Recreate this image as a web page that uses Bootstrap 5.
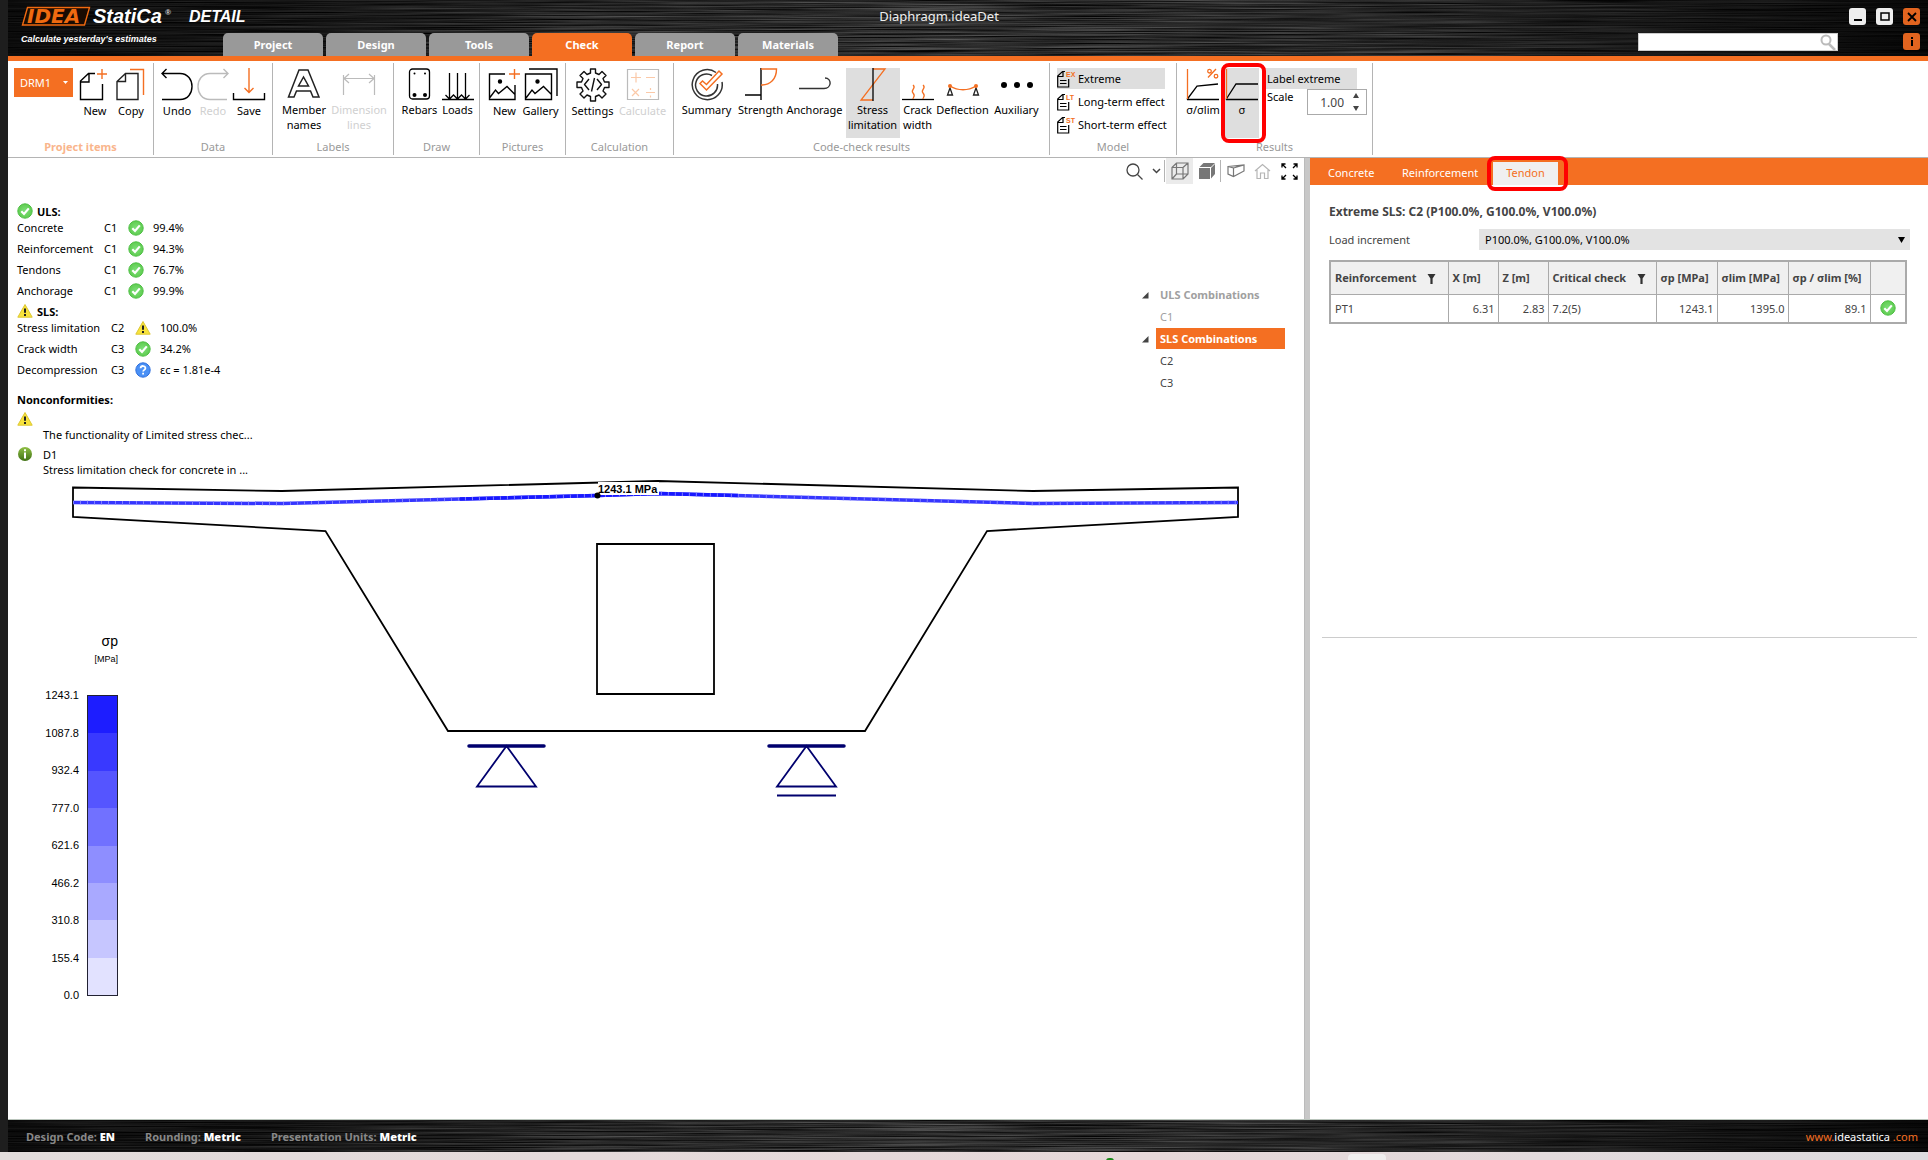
<!DOCTYPE html>
<html lang="en">
<head>
<meta charset="utf-8">
<meta name="viewport" content="width=device-width, initial-scale=1">
<title>IDEA StatiCa Detail - Diaphragm.ideaDet</title>
<link href="https://cdn.jsdelivr.net/npm/bootstrap@5.3.0/dist/css/bootstrap.min.css" rel="stylesheet">
<style>
:root { --brand: #f46f22; --line: #b4b4b4; }
html, body { height: 100%; }
body { font-family: "Noto Sans", "Open Sans", sans-serif; font-size: 11px; line-height: 15px; color: #000; background: #1e1e1e; }
button, input, select { font: inherit; }
svg { display: block; }
.app-shell { min-height: 100vh; }
.app-window { margin-left: 8px; background: #fff; }
.desk-edge { height: 8px; background: linear-gradient(90deg, #e2dcdb, #e6d8d9 60%, #dedcdf); overflow: hidden; }
.desk-edge .dot { width: 8px; height: 3px; margin-left: 1106px; border-radius: 4px 4px 0 0; background: #1b8a1b; margin-top: 6px; }
.desk-edge .pill { width: 38px; height: 8px; margin-left: 234px; border-radius: 4px 4px 0 0; background: #f0eeee; margin-top: 2px; }

/* brushed metal bars */
.metal { position: relative; background: #000; overflow: hidden; isolation: isolate; }
.metal > .grain { position: absolute; inset: 0; width: 100%; height: 100%; z-index: -1; }
.title-bar { height: 56px; }
.brand-box { width: 215px; padding-left: 12px; }
.main-tabs { gap: 3px; }
.main-tabs .nav-link { width: 100px; height: 23px; padding: 4px 0 0; text-align: center; font-weight: 700; line-height: 16px; color: #fff; background: #999; border-radius: 5px 5px 0 0; }
.main-tabs .nav-link.active { background: var(--brand); color: #fff; }
.doc-title { position: absolute; left: 0; right: 0; top: 7px; text-align: center; font-size: 13px; line-height: 18px; color: #eee; padding-right: 58px; }
.win-tools { width: 290px; padding: 8px 8px 0 0; }
.win-row { gap: 10px; }
.win-btn { width: 17px; height: 17px; padding: 0; border: 0; border-radius: 3px; background: #eee; }
.win-btn.hot { background: #e2641f; }
.find-box { width: 200px; height: 18px; background: #fff; border: 1px solid #ccc; }
.find-box input { border: 0; background: none; outline: 0; min-width: 0; }
.brand-rule { height: 5px; background: var(--brand); }

/* ribbon */
.ribbon { height: 97px; border-bottom: 1px solid var(--line); padding-top: 2px; }
.rgroup { height: 92px; border-right: 1px solid var(--line); padding-top: 5px; }
.rgroup .caption { color: #999; text-align: center; height: 15px; margin-bottom: 1px; }
.rgroup .caption.lit { color: #f9b58c; font-weight: 700; }
.tool { border: 0; background: none; padding: 0 0 1px; height: 70px; line-height: 15px; color: #000; white-space: nowrap; width: 36px; display: flex; flex-direction: column; align-items: center; }
.tool svg { flex: none; margin-bottom: 1px; }
.tool.on, .row-tool.on { background: #dedede; }
.tool:disabled { color: #d0d0d0; }
.tw-38 { width: 38px; } .tw-46 { width: 46px; } .tw-54 { width: 54px; } .tw-64 { width: 64px; } .tw-34 { width: 34px; }
.gw-146 { width: 146px; } .gw-119 { width: 119px; } .gw-121 { width: 121px; } .gw-86 { width: 86px; }
.gw-108 { width: 108px; } .gw-376 { width: 376px; } .gw-127 { width: 127px; } .gw-196 { width: 196px; }
.item-row { padding-left: 6px; }
.item-drop { width: 59px; height: 29px; background: var(--brand); color: #fff; border: 0; padding: 0 5px 0 6px; }
.model-list { gap: 2px; padding-left: 7px; }
.model-list svg { overflow: visible; }
.row-tool { border: 0; background: none; padding: 0; height: 21px; width: 108px; text-align: left; white-space: nowrap; }
.row-tool.label-tool { width: 94px; display: block; }
.scale-row { width: 104px; }
.spin-box { width: 60px; height: 26px; border: 1px solid #aaa; }
.spin-box input { border: 0; outline: 0; width: 36px; text-align: right; padding: 0; color: #444; font-size: 12px; }
.spin-box button { border: 0; background: none; padding: 0; height: 12px; }
.mark-red { position: absolute; border: 4px solid #f00; border-radius: 8px; pointer-events: none; }
.mark-sigma { inset: -5px -7px -5px -4px; z-index: 2; }
.mark-tab { inset: -6px -10px -6px -6px; z-index: 2; }

/* workspace */
.stage { position: relative; min-width: 0; }
.stage > .scene { position: absolute; left: 0; top: 0; width: 100%; }
.stage > .over { position: relative; }
.view-tools { height: 26px; padding-right: 1px; }
.view-tools button { border: 0; background: none; padding: 0; width: 27px; height: 26px; display: flex; align-items: center; justify-content: center; }
.view-tools button.narrow { width: 16px; }
.view-tools button.on { background: #ebebeb; }
.view-tools .sep { width: 1px; height: 22px; background: var(--line); margin-right: 1px; }
.checks { margin: 21px 0 0 9px; width: 260px; }
.sum-table { border-collapse: collapse; margin: 0 0 4px; }
.sum-table td { padding: 0; height: 21px; vertical-align: middle; white-space: nowrap; }
.uls td:nth-child(1) { width: 87px; } .sls td:nth-child(1) { width: 94px; }
.sum-table td:nth-child(2) { width: 24px; } .sum-table td:nth-child(3) { width: 25px; }
.head-line { height: 12px; font-weight: 700; gap: 4px; }
.note-head { font-weight: 700; padding-top: 8px; }
.note-text { padding-left: 26px; }
.note-id { padding-left: 10px; }
.combos { margin: 100px 19px 0 0; width: 143px; color: #555; }
.combos button { border: 0; background: none; padding: 0 0 0 4px; height: 21px; width: 129px; text-align: left; color: #444; margin-bottom: 1px; }
.combos .branch { font-weight: 700; }
.combos button.dim { color: #a0a0a0; }
.combos button.sel { background: var(--brand); color: #fff; }
.legend { margin: 155px 0 0 30px; width: 80px; font-family: "Liberation Sans", Arial, sans-serif; }
.legend .unit { font-size: 9px; line-height: 12px; margin: 3px 0 23px; }
.legend .qty { font-size: 14px; line-height: 18px; }
.legend .ticks { width: 41px; height: 315px; }
.legend .scale-bar { width: 31px; height: 301px; border: 1px solid #223; margin-top: 7px; }
.s1 { background: #1d1dff; } .s2 { background: #3939ff; } .s3 { background: #5555ff; } .s4 { background: #7171ff; }
.s5 { background: #8e8eff; } .s6 { background: #a9a9ff; } .s7 { background: #c6c6ff; } .s8 { background: #e2e2ff; }

.splitter { width: 6px; background: #c8c8c8; border-left: 1px solid #bbb; }
.side { width: 618px; color: #444; }
.side-tabs { height: 27px; background: var(--brand); padding: 4px 0 0 12px; }
.side-tabs .nav-link { padding: 3px 0 0; height: 23px; width: 74px; line-height: 16px; text-align: left; color: #fff; padding-left: 6px; }
.side-tabs .nav-link.mid { width: 97px; }
.side-tabs .nav-link.active { width: 65px; background: #f0f0f0; color: var(--brand); padding-left: 0; text-align: center; }
.side-body { padding: 19px 18px 0 19px; }
.side-head { font-weight: 700; font-size: 12px; }
.load-row { margin-top: 10px; }
.load-select { width: 100%; height: 21px; display: block; appearance: none; border: 0; border-radius: 0; background: #e3e3e3; padding: 0 6px; color: #000; }
.load-label { width: 150px; }
.res-table { width: 578px; margin: 10px 0 0; color: #444; border: 2px solid #aaa; border-collapse: collapse; table-layout: fixed; white-space: nowrap; }
.res-table th, .res-table td { border: 1px solid #aaa; padding: 0 3px 0 4px; vertical-align: middle; }
.res-table th { background: #f0f0f0; height: 33px; padding-right: 0; }
.res-table td { height: 29px; }
.c119 { width: 118px; } .c50 { width: 50px; } .c108 { width: 108px; } .c61 { width: 61px; } .c71 { width: 71px; } .c82 { width: 82px; }
.side-rule { margin: 313px 11px 0 12px; border-top: 1px solid #ccc; }

.status-bar { height: 33px; padding: 0 10px 0 18px; border-top: 1px solid #b9c4bb; font-weight: 700; color: #888; gap: 30px; }
.status-bar b { color: #fff; }
.site-link { font-weight: 400; color: var(--brand); text-decoration: none; }
.site-link span { color: #fff; }
</style>
<script src="https://cdn.jsdelivr.net/npm/bootstrap@5.3.0/dist/js/bootstrap.bundle.min.js"></script>
</head>
<body>
<svg width="0" height="0" class="position-absolute" aria-hidden="true">
  <defs>
    <filter id="brushed" x="0" y="0" width="100%" height="100%" color-interpolation-filters="sRGB">
      <feTurbulence type="fractalNoise" baseFrequency="0.006 0.8" numOctaves="3" seed="7"/>
      <feColorMatrix values="0.6 0 0 0 -0.12  0.6 0 0 0 -0.12  0.6 0 0 0 -0.12  0 0 0 0 1"/>
    </filter>
    <linearGradient id="shade">
      <stop offset="0" stop-color="#000" stop-opacity=".75"/><stop offset=".3" stop-color="#000" stop-opacity=".25"/>
      <stop offset=".5" stop-color="#222" stop-opacity=".1"/><stop offset=".7" stop-color="#111" stop-opacity=".3"/>
      <stop offset="1" stop-color="#000" stop-opacity=".85"/>
    </linearGradient>
    <radialGradient id="okFill"><stop offset="0" stop-color="#7ee07a"/><stop offset="1" stop-color="#5fcc50"/></radialGradient>
    <linearGradient id="infoFill" x2="0" y2="1"><stop offset="0" stop-color="#8fbf45"/><stop offset="1" stop-color="#3f7013"/></linearGradient>
    <symbol id="i-ok" viewBox="0 0 16 16"><circle cx="8" cy="8" r="7.2" fill="url(#okFill)" stroke="#4fbf45"/><path d="M4.3 8.3 7 11l4.8-5.6" fill="none" stroke="#fff" stroke-width="2.2"/></symbol>
    <symbol id="i-warn" viewBox="0 0 16 16"><path d="M8 1.5 15.2 14.2H.8z" fill="#f8e33c" stroke="#dcc733" stroke-linejoin="round"/><path d="M8 5.4v4.4M8 11v2" stroke="#222" stroke-width="2"/></symbol>
    <symbol id="i-ask" viewBox="0 0 16 16"><circle cx="8" cy="8" r="7.2" fill="#4a90f5" stroke="#2f6fdd"/><path d="M5.6 6.2c.2-3 4.9-2.8 4.8 0 0 1.6-2.3 1.7-2.3 3.3M8.1 10.8v1.8" fill="none" stroke="#fff" stroke-width="1.8"/></symbol>
    <symbol id="i-info" viewBox="0 0 16 16"><circle cx="8" cy="8" r="7" fill="url(#infoFill)"/><path d="M8 6.500v6M8 3.200v2" stroke="#fff" stroke-width="2"/></symbol>
    <symbol id="i-doc" viewBox="0 0 17 18"><path d="M8 1.500H5.500L.7 6v11h11V9M1 6.500h5V2M3 10.500h6.500M3 13.500h6.500" fill="none" stroke="#000" stroke-width="1.200"/></symbol>
    <symbol id="i-filter" viewBox="0 0 10 10"><path d="M.5 0h8L5.600 4.500V10H3.400V4.500z" fill="#333"/></symbol>
  </defs>
</svg>

<div class="app-shell d-flex flex-column">
<div class="app-window d-flex flex-column flex-grow-1">
  <header class="metal title-bar d-flex">
    <svg class="grain" aria-hidden="true"><rect width="100%" height="100%" filter="url(#brushed)"/><rect width="100%" height="100%" fill="url(#shade)"/></svg>
    <div class="brand-box flex-shrink-0">
      <svg width="235" height="50" viewBox="20 0 235 50" role="img" aria-label="IDEA StatiCa Detail" font-family="'Liberation Sans', Arial, sans-serif" font-style="italic" font-weight="700">
        <path d="M27.500 7.500h62L84.500 25H22.500z" fill="#1a0b02" stroke="#f06a10" stroke-width="1.400"/>
        <text x="27" y="23" font-family="'DejaVu Sans', sans-serif" font-size="20" fill="#f06a10">IDEA</text>
        <text x="93" y="23" font-size="20" fill="#fff">StatiCa</text>
        <text x="165" y="15" font-size="8" fill="#ddd">®</text>
        <text x="189" y="22" font-size="16" fill="#fff">DETAIL</text>
        <text x="21" y="42" font-size="9" fill="#fff">Calculate yesterday's estimates</text>
      </svg>
    </div>
    <nav class="nav main-tabs align-self-end flex-nowrap" aria-label="Main">
      <a class="nav-link" href="#">Project</a><a class="nav-link" href="#">Design</a><a class="nav-link" href="#">Tools</a><a class="nav-link active" href="#" aria-current="page">Check</a><a class="nav-link" href="#">Report</a><a class="nav-link" href="#">Materials</a>
    </nav>
    <div class="doc-title pe-none">Diaphragm.ideaDet</div>
    <div class="win-tools ms-auto d-flex flex-column align-items-end gap-2 position-relative">
      <div class="win-row d-flex">
        <button class="win-btn" aria-label="Minimize"><svg width="17" height="17"><path d="M5 12h8" stroke="#000" stroke-width="2"/></svg></button>
        <button class="win-btn" aria-label="Maximize"><svg width="17" height="17"><rect x="5" y="5" width="8" height="7" fill="none" stroke="#000" stroke-width="1.500"/></svg></button>
        <button class="win-btn hot" aria-label="Close"><svg width="17" height="17"><path d="m5 5 8 8m0-8-8 8" stroke="#000" stroke-width="1.800"/></svg></button>
      </div>
      <div class="d-flex justify-content-between w-100">
        <label class="find-box d-flex align-items-center justify-content-between"><input type="search" class="flex-grow-1" aria-label="Search"><svg width="17" height="17"><g fill="none" stroke="#bbb" stroke-width="2"><circle cx="6" cy="6" r="4.500"/><path d="m9 10 6 6" stroke-width="2.500"/></g></svg></label>
        <button class="win-btn hot" aria-label="Information"><svg width="17" height="17"><path d="M9 7v6M9 4v2" stroke="#000" stroke-width="2"/></svg></button>
      </div>
    </div>
  </header>
  <div class="brand-rule"></div>

  <div class="ribbon d-flex">
    <section class="rgroup gw-146 d-flex flex-column justify-content-between">
      <div class="item-row d-flex">
        <button class="item-drop me-1 d-flex align-items-center justify-content-between" data-bs-toggle="dropdown">DRM1<svg width="5" height="4"><path d="M0 0h5L2.500 3z" fill="#fff"/></svg></button>
        <button class="tool"><svg width="32" height="34" viewBox="0 0 32 34" fill="none" stroke="#000" stroke-width="1.400"><path d="M12 5.500h-2.500L1.500 13v18.500H23.500V16M1.500 14h8.500V6M9 5.500h7"/><path d="M18 6h10M23 1v10" stroke="#f46f22"/></svg>New</button>
        <button class="tool"><svg width="32" height="34" viewBox="0 0 32 34" fill="none" stroke="#222" stroke-width="1.400"><path d="M10.500 5.500H23v26H2V13.500zM2.500 13.500h8V6"/><path d="M15 1.500h13.500V27" stroke="#f46f22"/></svg>Copy</button>
      </div>
      <div class="caption lit">Project items</div>
    </section>
    <section class="rgroup gw-119 d-flex flex-column justify-content-between">
      <div class="d-flex justify-content-center">
        <button class="tool"><svg width="34" height="34" viewBox="0 0 34 34" fill="none" stroke="#000" stroke-width="1.400"><path d="M2 5.500h18c16 0 16 26 0 26H2M6.500 1 2 5.500 6.500 10"/></svg>Undo</button>
        <button class="tool" disabled><svg width="34" height="34" viewBox="0 0 34 34" fill="none" stroke="#bbb" stroke-width="1.400"><path d="M32 5.500H14c-16 0-16 26 0 26h17M27.500 1 32 5.500 27.500 10"/></svg>Redo</button>
        <button class="tool"><svg width="34" height="34" viewBox="0 0 34 34" fill="none" stroke="#000" stroke-width="1.400"><path d="M1.500 25v6.500h31V25"/><path d="M17 0v24M12.500 20l4.500 4.500L21.500 20" stroke="#f46f22"/></svg>Save</button>
      </div>
      <div class="caption">Data</div>
    </section>
    <section class="rgroup gw-121 d-flex flex-column justify-content-between">
      <div class="d-flex ps-2">
        <button class="tool tw-46"><svg width="34" height="33" viewBox="0 0 34 33" fill="none" stroke="#222" stroke-width="1.500"><path d="M12 2h9l11 27h-6l-2.500-6h-14L7 29H1.500zM16.500 9l-5 9h10z"/></svg>Member<br>names</button>
        <button class="tool tw-64" disabled><svg width="34" height="33" viewBox="0 0 34 33" fill="none" stroke="#bbb" stroke-width="1.200"><path d="M1.500 7v20M32.500 7v20M2 10.500h30M7 6l-5 4.500L7 15M27 6l5 4.500-5 4.500"/></svg>Dimension<br>lines</button>
      </div>
      <div class="caption">Labels</div>
    </section>
    <section class="rgroup gw-86 d-flex flex-column justify-content-between">
      <div class="d-flex justify-content-center ps-1">
        <button class="tool tw-38"><svg width="24" height="33" viewBox="0 0 24 33"><rect x="1.500" y="1" width="20" height="30" rx="3" fill="none" stroke="#000" stroke-width="1.300"/><circle cx="6.500" cy="27" r="2"/><circle cx="17" cy="27" r="2"/><circle cx="6.500" cy="5.500" r="1"/><circle cx="17" cy="5.500" r="1"/></svg>Rebars</button>
        <button class="tool tw-38"><svg width="34" height="33" viewBox="0 0 34 33" fill="none" stroke="#000" stroke-width="1.300"><path d="M1 31.500h32M8.500 5v26M16.500 5v26M24.500 5v26M4.500 27l4 4 4-4 4 4 4-4 4 4 4-4"/></svg>Loads</button>
      </div>
      <div class="caption">Draw</div>
    </section>
    <section class="rgroup gw-86 d-flex flex-column justify-content-between">
      <div class="d-flex justify-content-center">
        <button class="tool"><svg width="34" height="34" viewBox="0 0 34 34" fill="none" stroke="#000" stroke-width="1.400"><path d="M17 6H1.500v25.500H27V17M1.500 30l6-8 3 3.500 8.500-7 8 8"/><path d="M21 6h11M26.500 1v10" stroke="#f46f22"/><circle cx="12" cy="13.500" r="1.500" fill="#000"/></svg>New</button>
        <button class="tool"><svg width="34" height="34" viewBox="0 0 34 34" fill="none" stroke="#000" stroke-width="1.400"><path d="M1.500 6h26v25.500h-26zM5 1h28v27M2 30l6-8 3 3.500 8.500-7 8 8"/><circle cx="13.500" cy="13.500" r="1.500" fill="#000"/></svg>Gallery</button>
      </div>
      <div class="caption">Pictures</div>
    </section>
    <section class="rgroup gw-108 d-flex flex-column justify-content-between">
      <div class="d-flex justify-content-center">
        <button class="tool tw-46"><svg width="34" height="34" viewBox="0 0 34 34" fill="none" stroke="#111" stroke-width="1.400" stroke-linejoin="round"><path d="M14.500 1h5v4l3.500 1.500 3-3 4 4-3 3L28.500 14H33v5.500h-4.500L27 23l3 3-4 4-3-3-3.500 1.500V33h-5v-4.500L11 27l-3 3-4-4 3-3-1.500-3.500H1V14h4.500L7 10.500l-3-3 4-4 3 3L14.500 5z"/><path d="m13 11-4.500 5.500L13 22M21 11l4.500 5.500L21 22M18.500 10l-3 13.500"/></svg>Settings</button>
        <button class="tool tw-54" disabled><svg width="34" height="34" viewBox="0 0 34 34" fill="none" stroke="#bbb" stroke-width="1.200"><path d="M1.500 1.500h31v30h-31z"/><path d="M5 9.500h10M10 4.500v10M20 9.500h9M6 21l7 7M13 21l-7 7M20 24.500h9M24.500 20v2M24.500 27.500v2" stroke="#fbc9a8"/></svg>Calculate</button>
      </div>
      <div class="caption">Calculation</div>
    </section>
    <section class="rgroup gw-376 d-flex flex-column justify-content-between">
      <div class="d-flex justify-content-center">
        <button class="tool tw-54"><svg width="34" height="33" viewBox="0 0 34 33" fill="none" stroke="#333" stroke-width="1.500"><path d="M26 4.500A15 15 0 1 0 32 14M22 7.500A11 11 0 1 0 27.500 16"/><path d="m10 15.500 2.500-2.500 4 3.500L29 3l3 3-15.500 16z" stroke="#f46f22"/></svg>Summary</button>
        <button class="tool tw-54"><svg width="34" height="33" viewBox="0 0 34 33" fill="none" stroke="#000" stroke-width="1.400"><path d="M1 27h16M17 0v32"/><path d="M17 1h15.500c0 10-6 16-15.500 16" stroke="#f46f22"/></svg>Strength</button>
        <button class="tool tw-54"><svg width="34" height="33" viewBox="0 0 34 33" fill="none" stroke="#333" stroke-width="1.400"><path d="M1 20.500h25c8 0 8-10.500 1-10.500"/></svg>Anchorage</button>
        <button class="tool tw-54 ms-1 on" aria-pressed="true"><svg width="34" height="33" viewBox="0 0 34 33" fill="none" stroke="#f46f22" stroke-width="1.300"><path d="M17 1h12L5 32h12"/><path d="M17 0v33" stroke="#000"/></svg>Stress<br>limitation</button>
        <button class="tool"><svg width="34" height="33" viewBox="0 0 34 33" fill="none" stroke="#000" stroke-width="1.300"><path d="M1 31.500h32"/><path d="M12 17c4 3-3 5 0 8s0 4 0 6M22 17c4 3-3 5 0 8s0 4 0 6" stroke="#f46f22"/></svg>Crack<br>width</button>
        <button class="tool tw-54"><svg width="34" height="33" viewBox="0 0 34 33" fill="none" stroke="#222" stroke-width="1.300"><path d="m4 20 2.500 7h-5zM30 20l2.500 7h-5z"/><path d="M4 18c8 5 18 5 26 0" stroke="#f46f22"/><g fill="#f46f22" stroke="none"><circle cx="4" cy="18" r="2"/><circle cx="30" cy="18" r="2"/></g></svg>Deflection</button>
        <button class="tool tw-54"><svg width="34" height="33" viewBox="0 0 34 33"><circle cx="4" cy="17" r="3"/><circle cx="17" cy="17" r="3"/><circle cx="30" cy="17" r="3"/></svg>Auxiliary</button>
      </div>
      <div class="caption">Code-check results</div>
    </section>
    <section class="rgroup gw-127 d-flex flex-column justify-content-between">
      <div class="model-list d-flex flex-column">
        <button class="row-tool on d-flex align-items-center gap-1" aria-pressed="true"><svg width="17" height="18"><use href="#i-doc"/><text x="9" y="7" font-size="7" font-weight="700" fill="#f46f22" font-family="Liberation Sans">EX</text></svg><span>Extreme</span></button>
        <button class="row-tool d-flex align-items-center gap-1"><svg width="17" height="18"><use href="#i-doc"/><text x="9" y="7" font-size="7" font-weight="700" fill="#f46f22" font-family="Liberation Sans">LT</text></svg><span>Long-term effect</span></button>
        <button class="row-tool d-flex align-items-center gap-1"><svg width="17" height="18"><use href="#i-doc"/><text x="9" y="7" font-size="7" font-weight="700" fill="#f46f22" font-family="Liberation Sans">ST</text></svg><span>Short-term effect</span></button>
      </div>
      <div class="caption">Model</div>
    </section>
    <section class="rgroup gw-196 d-flex flex-column justify-content-between">
      <div class="d-flex ps-2">
        <button class="tool"><svg width="34" height="33" viewBox="0 0 34 33" fill="none" stroke="#000" stroke-width="1.300"><path d="M1 31.500h32M1 31.500 11 18l21-2"/><path d="M1.500 1v30M22 9.500 30 1M23.500 5a1.800 1.800 0 1 0 0-3.600 1.800 1.800 0 0 0 0 3.600zM30 10a1.800 1.800 0 1 0 0-3.600A1.800 1.800 0 0 0 30 10z" stroke="#f46f22"/></svg>σ/σlim</button>
        <div class="position-relative ms-1"><button class="tool tw-34 on" aria-pressed="true"><svg width="34" height="33" viewBox="0 0 34 33" fill="none" stroke="#000" stroke-width="1.300"><path d="M1 31.500h32M1 31.500 11 16h22"/><path d="M1.500 1v30" stroke="#f46f22"/></svg>σ</button><span class="mark-red mark-sigma"></span></div>
        <div class="ps-1">
          <button class="row-tool label-tool on ps-1">Label extreme</button>
          <div class="scale-row d-flex align-items-start justify-content-between"><label for="scale" class="ps-1">Scale</label>
            <div class="spin-box d-flex align-items-center"><input id="scale" type="text" inputmode="decimal" value="1.00"><span class="d-flex flex-column ms-2"><button aria-label="Increase"><svg width="8" height="12"><path d="M1 8h6L4 3z" fill="#444"/></svg></button><button aria-label="Decrease"><svg width="8" height="12"><path d="M1 4h6L4 9z" fill="#444"/></svg></button></span></div>
          </div>
        </div>
      </div>
      <div class="caption">Results</div>
    </section>
  </div>

  <main class="d-flex flex-grow-1">
    <section class="stage flex-grow-1">
      <svg class="scene" viewBox="8 158 1296 961" preserveAspectRatio="xMinYMin meet" fill="none">
        <path d="M73 487.500 282 491l376-10 375 10 205-3.500v29.500L987 531 865 731H448L325.500 531 73 517z" stroke="#000" stroke-width="1.800"/>
        <path d="M597 544h117v150H597z" stroke="#000" stroke-width="1.800"/>
        <path d="M73 502.500l209 1 315-8 61-2 375 10 205-1" stroke="#3636ff" stroke-width="3.500"/>
        <path d="M460 499l138-3.500 60-2 80 2" stroke="#1818ff" stroke-width="3.500"/>
        <path d="M73 502.500l209 1 315-8 61-2 375 10 205-1" stroke="#7d7dff" stroke-width="3.500" stroke-dasharray="1 6"/>
        <rect x="598" y="482" width="61" height="13" fill="#fff"/>
        <circle cx="597.500" cy="495.500" r="3" fill="#000"/>
        <text x="598" y="493" font-family="'Liberation Sans', Arial, sans-serif" font-size="11" font-weight="700" fill="#000">1243.1 MPa</text>
        <g stroke="#00006e" stroke-width="1.800"><path d="M469 746h75M769 746h75" stroke-width="3.500" stroke-linecap="round"/>
          <path d="M506.500 746 536 786.500h-59zM806.500 746 836 786.500h-59zM777 795.500h59"/></g>
      </svg>
      <div class="over">
        <div class="view-tools d-flex justify-content-end align-items-center">
          <button aria-label="Zoom"><svg width="17" height="17" fill="none" stroke="#444" stroke-width="1.300"><circle cx="7" cy="7" r="6"/><path d="m11.500 11.500 5 5"/></svg></button>
          <button class="narrow" aria-label="Zoom options"><svg width="9" height="6" fill="none" stroke="#444" stroke-width="1.500"><path d="m1 1 3.500 3.500L8 1"/></svg></button>
          <span class="sep"></span>
          <button class="on" aria-label="Wireframe"><svg width="18" height="18" fill="none" stroke="#777" stroke-width="1.200"><path d="M1 5.500h11V17H1zM1 5.500 5.500 1H17v11l-5 5M12 5.500 17 1M5.500 1v11H17M1 17l4.500-5"/></svg></button>
          <button aria-label="Solid"><svg width="18" height="18" fill="#777"><path d="M1 6h11v11H1zM1.500 5 5.500 1H17l-4 4zM13 6l4-4v10l-4 4.500z"/></svg></button>
          <span class="sep"></span>
          <button aria-label="Perspective"><svg width="18" height="14" fill="none" stroke="#777" stroke-width="1.200"><path d="M1 2.500 17 1v6L6.500 12.500 1 10zM1 2.500l5.500 1.500v8.500M6.500 4 17 1"/></svg></button>
          <button aria-label="Home"><svg width="17" height="17" fill="none" stroke="#b5b5b5" stroke-width="1.200"><path d="M1 8 8.500 1.500 16 8M3 7v8.500h3.500V10h4v5.500H14V7"/></svg></button>
          <button aria-label="Full screen"><svg width="17" height="17" fill="none" stroke="#000" stroke-width="1.300"><path d="M1 4.500V1h3.500M1 1l4 4M12.500 1H16v3.500M16 1l-4 4M1 12.500V16h3.500M1 16l4-4M12.500 16H16v-3.500M16 16l-4-4"/></svg></button>
        </div>
        <div class="d-flex justify-content-between align-items-start">
          <div class="checks">
            <div class="head-line d-flex align-items-center"><svg width="16" height="16"><use href="#i-ok"/></svg>ULS:</div>
            <table class="sum-table uls"><tbody>
              <tr><td>Concrete</td><td>C1</td><td><svg width="16" height="16"><use href="#i-ok"/></svg></td><td>99.4%</td></tr>
              <tr><td>Reinforcement</td><td>C1</td><td><svg width="16" height="16"><use href="#i-ok"/></svg></td><td>94.3%</td></tr>
              <tr><td>Tendons</td><td>C1</td><td><svg width="16" height="16"><use href="#i-ok"/></svg></td><td>76.7%</td></tr>
              <tr><td>Anchorage</td><td>C1</td><td><svg width="16" height="16"><use href="#i-ok"/></svg></td><td>99.9%</td></tr>
            </tbody></table>
            <div class="head-line d-flex align-items-center"><svg width="16" height="16"><use href="#i-warn"/></svg>SLS:</div>
            <table class="sum-table sls"><tbody>
              <tr><td>Stress limitation</td><td>C2</td><td><svg width="16" height="16"><use href="#i-warn"/></svg></td><td>100.0%</td></tr>
              <tr><td>Crack width</td><td>C3</td><td><svg width="16" height="16"><use href="#i-ok"/></svg></td><td>34.2%</td></tr>
              <tr><td>Decompression</td><td>C3</td><td><svg width="16" height="16"><use href="#i-ask"/></svg></td><td>εc = 1.81e-4</td></tr>
            </tbody></table>
            <div class="note-head">Nonconformities:</div>
            <div class="d-flex mt-1"><svg width="16" height="16"><use href="#i-warn"/></svg></div>
            <div class="note-text">The functionality of Limited stress chec...</div>
            <div class="d-flex mt-1 align-items-center"><svg width="16" height="16"><use href="#i-info"/></svg><span class="note-id">D1</span></div>
            <div class="note-text">Stress limitation check for concrete in ...</div>
          </div>
          <div class="combos">
            <div class="d-flex align-items-center justify-content-between"><svg width="7" height="7"><path d="M6.500 0v6.500H0z" fill="#444"/></svg><button class="branch dim">ULS Combinations</button></div>
            <div class="d-flex justify-content-end"><button class="dim">C1</button></div>
            <div class="d-flex align-items-center justify-content-between"><svg width="7" height="7"><path d="M6.500 0v6.500H0z" fill="#444"/></svg><button class="branch sel">SLS Combinations</button></div>
            <div class="d-flex justify-content-end"><button>C2</button></div>
            <div class="d-flex justify-content-end"><button>C3</button></div>
          </div>
        </div>
        <div class="legend">
          <div class="text-end qty">σp</div>
          <div class="text-end unit">[MPa]</div>
          <div class="d-flex justify-content-between">
            <div class="ticks d-flex flex-column justify-content-between text-end"><span>1243.1</span><span>1087.8</span><span>932.4</span><span>777.0</span><span>621.6</span><span>466.2</span><span>310.8</span><span>155.4</span><span>0.0</span></div>
            <div class="scale-bar d-flex flex-column"><i class="flex-fill s1"></i><i class="flex-fill s2"></i><i class="flex-fill s3"></i><i class="flex-fill s4"></i><i class="flex-fill s5"></i><i class="flex-fill s6"></i><i class="flex-fill s7"></i><i class="flex-fill s8"></i></div>
          </div>
        </div>
      </div>
    </section>
    <div class="splitter flex-shrink-0"></div>
    <aside class="side flex-shrink-0">
      <nav class="side-tabs nav flex-nowrap" aria-label="Results">
        <a class="nav-link" href="#">Concrete</a><a class="nav-link mid" href="#">Reinforcement</a>
        <span class="position-relative"><a class="nav-link active" href="#">Tendon</a><span class="mark-red mark-tab"></span></span>
      </nav>
      <div class="side-body">
        <div class="side-head">Extreme SLS: C2 (P100.0%, G100.0%, V100.0%)</div>
        <div class="load-row d-flex align-items-center">
          <label class="load-label" for="load">Load increment</label>
          <div class="position-relative flex-grow-1"><select id="load" class="load-select"><option>P100.0%, G100.0%, V100.0%</option></select>
            <svg class="position-absolute end-0 top-0 mt-2 me-1 pe-none" width="8" height="6"><path d="M0 0h7L3.500 6z"/></svg></div>
        </div>
        <table class="res-table">
          <thead><tr><th class="c119">Reinforcement <svg class="d-inline ms-2" width="10" height="10"><use href="#i-filter"/></svg></th><th class="c50">X [m]</th><th class="c50">Z [m]</th><th class="c108">Critical check <svg class="d-inline ms-2" width="10" height="10"><use href="#i-filter"/></svg></th><th class="c61">σp [MPa]</th><th class="c71">σlim [MPa]</th><th class="c82">σp / σlim [%]</th><th></th></tr></thead>
          <tbody><tr><td>PT1</td><td class="text-end">6.31</td><td class="text-end">2.83</td><td>7.2(5)</td><td class="text-end">1243.1</td><td class="text-end">1395.0</td><td class="text-end">89.1</td><td><svg class="mx-auto" width="16" height="16"><use href="#i-ok"/></svg></td></tr></tbody>
        </table>
      </div>
      <div class="side-rule"></div>
    </aside>
  </main>

  <footer class="metal status-bar d-flex align-items-center">
    <svg class="grain" aria-hidden="true"><rect width="100%" height="100%" filter="url(#brushed)"/><rect width="100%" height="100%" fill="url(#shade)"/></svg>
    <span>Design Code: <b>EN</b></span><span>Rounding: <b>Metric</b></span><span>Presentation Units: <b>Metric</b></span>
    <a class="site-link ms-auto" href="#">www.<span>ideastatica</span> .com</a>
  </footer>
</div>
<div class="desk-edge d-flex"><div class="dot"></div><div class="pill"></div></div>
</div>
</body>
</html>
